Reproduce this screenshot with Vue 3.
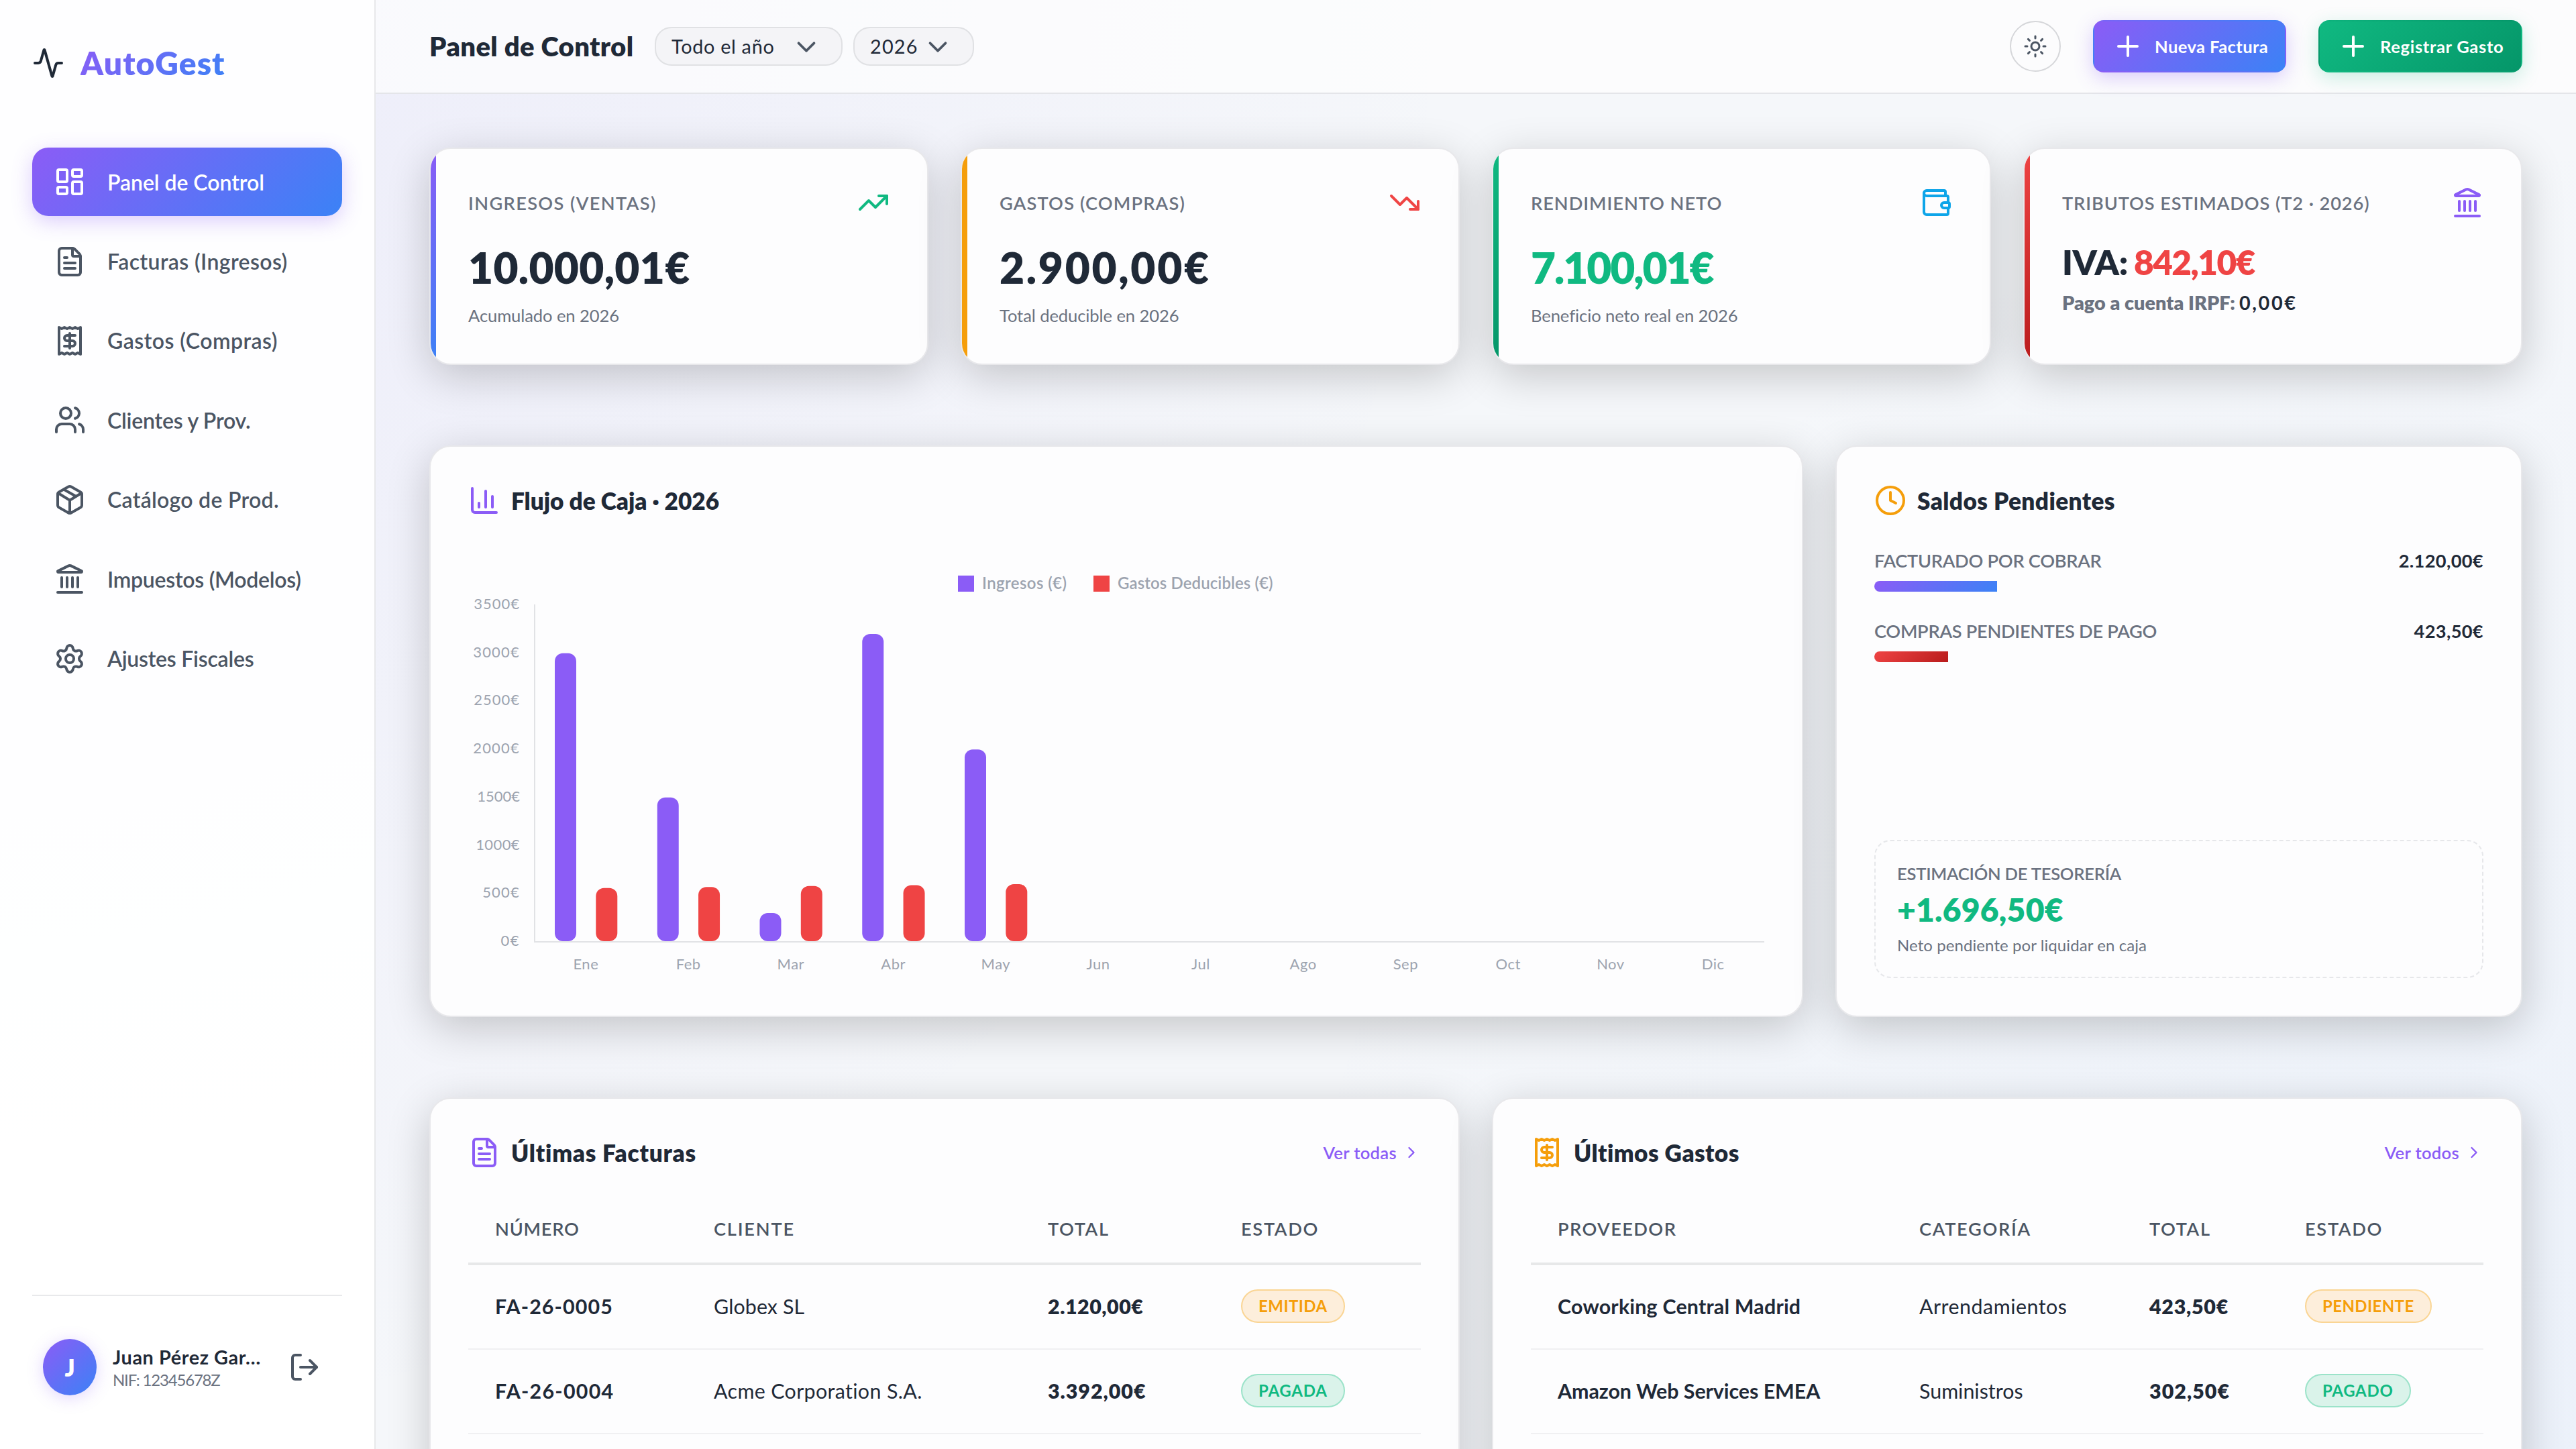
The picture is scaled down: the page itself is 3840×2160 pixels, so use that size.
<script setup>
import { h } from 'vue'

// 24-unit stroke icons, each a list of path definitions
const shapes = {
  activity: ['M22 12h-2.48a2 2 0 0 0-1.93 1.46l-2.35 8.36a.25.25 0 0 1-.48 0L9.24 2.18a.25.25 0 0 0-.48 0l-2.35 8.36A2 2 0 0 1 4.49 12H2'],
  dashboard: [
    'M4 3h5a1 1 0 0 1 1 1v7a1 1 0 0 1-1 1H4a1 1 0 0 1-1-1V4a1 1 0 0 1 1-1z',
    'M15 3h5a1 1 0 0 1 1 1v3a1 1 0 0 1-1 1h-5a1 1 0 0 1-1-1V4a1 1 0 0 1 1-1z',
    'M15 12h5a1 1 0 0 1 1 1v7a1 1 0 0 1-1 1h-5a1 1 0 0 1-1-1v-7a1 1 0 0 1 1-1z',
    'M4 16h5a1 1 0 0 1 1 1v3a1 1 0 0 1-1 1H4a1 1 0 0 1-1-1v-3a1 1 0 0 1 1-1z'
  ],
  file: [
    'M6 22a2 2 0 0 1-2-2V4a2 2 0 0 1 2-2h8a2.4 2.4 0 0 1 1.704.706l3.588 3.588A2.4 2.4 0 0 1 20 8v12a2 2 0 0 1-2 2z',
    'M14 2v5a1 1 0 0 0 1 1h5', 'M10 9H8', 'M16 13H8', 'M16 17H8'
  ],
  receipt: [
    'M4 2v20l2-1 2 1 2-1 2 1 2-1 2 1 2-1 2 1V2l-2 1-2-1-2 1-2-1-2 1-2-1-2 1Z',
    'M16 8h-6a2 2 0 1 0 0 4h4a2 2 0 1 1 0 4H8', 'M12 17.5v-11'
  ],
  users: [
    'M16 21v-2a4 4 0 0 0-4-4H6a4 4 0 0 0-4 4v2', 'M5 7a4 4 0 1 0 8 0a4 4 0 1 0-8 0',
    'M22 21v-2a4 4 0 0 0-3-3.87', 'M16 3.13a4 4 0 0 1 0 7.75'
  ],
  box: [
    'M11 21.73a2 2 0 0 0 2 0l7-4A2 2 0 0 0 21 16V8a2 2 0 0 0-1-1.73l-7-4a2 2 0 0 0-2 0l-7 4A2 2 0 0 0 3 8v8a2 2 0 0 0 1 1.73z',
    'M12 22V12', 'm3.3 7 7.703 4.734a2 2 0 0 0 1.994 0L20.7 7', 'm7.5 4.27 9 5.15'
  ],
  bank: [
    'M10 18v-7', 'M14 18v-7', 'M18 18v-7', 'M6 18v-7', 'M3 22h18',
    'M11.12 2.198a2 2 0 0 1 1.76.006l7.866 3.847c.476.233.31.949-.22.949H3.474c-.53 0-.695-.716-.22-.949z'
  ],
  gear: [
    'M9.671 4.136a2.34 2.34 0 0 1 4.659 0 2.34 2.34 0 0 0 3.319 1.915 2.34 2.34 0 0 1 2.33 4.033 2.34 2.34 0 0 0 0 3.831 2.34 2.34 0 0 1-2.33 4.033 2.34 2.34 0 0 0-3.319 1.915 2.34 2.34 0 0 1-4.659 0 2.34 2.34 0 0 0-3.32-1.915 2.34 2.34 0 0 1-2.33-4.033 2.34 2.34 0 0 0 0-3.831A2.34 2.34 0 0 1 6.35 6.051a2.34 2.34 0 0 0 3.319-1.915',
    'M9 12a3 3 0 1 0 6 0a3 3 0 1 0-6 0'
  ],
  logout: ['m16 17 5-5-5-5', 'M21 12H9', 'M9 21H5a2 2 0 0 1-2-2V5a2 2 0 0 1 2-2h4'],
  down: ['m6 9 6 6 6-6'],
  right: ['m9 18 6-6-6-6'],
  plus: ['M5 12h14', 'M12 5v14'],
  sun: [
    'M8 12a4 4 0 1 0 8 0a4 4 0 1 0-8 0', 'M12 2v2', 'M12 20v2', 'm4.93 4.93 1.41 1.41', 'm17.66 17.66 1.41 1.41',
    'M2 12h2', 'M20 12h2', 'm6.34 17.66-1.41 1.41', 'm19.07 4.93-1.41 1.41'
  ],
  up: ['M16 7h6v6', 'm22 7-8.5 8.5-5-5L2 17'],
  fall: ['M16 17h6v-6', 'm22 17-8.5-8.5-5 5L2 7'],
  wallet: [
    'M19 7V4a1 1 0 0 0-1-1H5a2 2 0 0 0 0 4h15a1 1 0 0 1 1 1v4h-3a2 2 0 0 0 0 4h3a1 1 0 0 0 1-1v-2a1 1 0 0 0-1-1',
    'M3 5v14a2 2 0 0 0 2 2h15a1 1 0 0 0 1-1v-4'
  ],
  chart: ['M3 3v16a2 2 0 0 0 2 2h16', 'M18 17V9', 'M13 17V5', 'M8 17v-3'],
  clock: ['M2 12a10 10 0 1 0 20 0a10 10 0 1 0-20 0', 'M12 6v6l4 2']
}

const Icon = (props) =>
  h('svg', {
    width: props.size || 48,
    height: props.size || 48,
    viewBox: '0 0 24 24',
    fill: 'none',
    stroke: 'currentColor',
    'stroke-width': 2,
    'stroke-linecap': 'round',
    'stroke-linejoin': 'round',
    style: 'flex:none;display:block'
  }, shapes[props.name].map((d) => h('path', { d })))
Icon.props = ['name', 'size']

const track = (n) => ({ letterSpacing: n + 'px' })

const nav = [
  { icon: 'dashboard', label: 'Panel de Control', t: -0.05, active: true },
  { icon: 'file', label: 'Facturas (Ingresos)', t: 0.38 },
  { icon: 'receipt', label: 'Gastos (Compras)', t: 0.46 },
  { icon: 'users', label: 'Clientes y Prov.', t: -0.22 },
  { icon: 'box', label: 'Catálogo de Prod.', t: 0.28 },
  { icon: 'bank', label: 'Impuestos (Modelos)', t: -0.27 },
  { icon: 'gear', label: 'Ajustes Fiscales', t: -0.25 }
]

const kpis = [
  { tone: 'violet', label: 'INGRESOS (VENTAS)', lt: 1.35, icon: 'up', ic: 'c-green', value: '10.000,01€', t: 0.3, sub: 'Acumulado en 2026' },
  { tone: 'amber', label: 'GASTOS (COMPRAS)', lt: 1.15, icon: 'fall', ic: 'c-red', value: '2.900,00€', t: 2.7, sub: 'Total deducible en 2026' },
  { tone: 'green', label: 'RENDIMIENTO NETO', lt: 0.95, icon: 'wallet', ic: 'c-sky', value: '7.100,01€', t: -2.1, sub: 'Beneficio neto real en 2026', vc: 'c-green' }
]

// chart geometry
const AXIS_X = 99
const BASE = 586
const SLOT = 152.75
const SCALE = 502 / 3500
const ticks = [
  { v: 3500, t: 0.99 }, { v: 3000, t: 1.2 }, { v: 2500, t: 1 }, { v: 2000, t: 1.2 },
  { v: 1500, t: 0 }, { v: 1000, t: 0.4 }, { v: 500, t: 1.2 }, { v: 0, t: 1.5 }
]
const months = ['Ene', 'Feb', 'Mar', 'Abr', 'May', 'Jun', 'Jul', 'Ago', 'Sep', 'Oct', 'Nov', 'Dic']
const series = [
  { income: 3000, expense: 560 },
  { income: 1500, expense: 570 },
  { income: 300, expense: 580 },
  { income: 3200, expense: 590 },
  { income: 2000, expense: 600 }
]
const bars = series.flatMap((m, i) => [
  { x: AXIS_X + i * SLOT + 30, h: m.income * SCALE - 1, fill: '#8b5cf6' },
  { x: AXIS_X + i * SLOT + 91.3, h: m.expense * SCALE - 1, fill: '#ef4444' }
])

const balances = [
  { label: 'FACTURADO POR COBRAR', value: '2.120,00€', pct: 20.1, tone: 'violet' },
  { label: 'COMPRAS PENDIENTES DE PAGO', value: '423,50€', pct: 12.1, tone: 'red' }
]

const tables = [
  {
    title: 'Últimas Facturas', tt: 0.75, icon: 'file', ic: 'c-violet', link: 'Ver todas', cls: 'invoices',
    cols: [['NÚMERO', 0.77], ['CLIENTE', 1.8], ['TOTAL', 1.6], ['ESTADO', 1.7]],
    rows: [
      { cells: [['FA-26-0005', 1.1], ['Globex SL', 0.1], ['2.120,00€', 0.5]], state: 'EMITIDA', st: 0.45, kind: 'warn' },
      { cells: [['FA-26-0004', 1.25], ['Acme Corporation S.A.', 0.35], ['3.392,00€', 0.95]], state: 'PAGADA', st: 0.75, kind: 'ok' }
    ]
  },
  {
    title: 'Últimos Gastos', tt: 0.4, icon: 'receipt', ic: 'c-amber', link: 'Ver todos', cls: 'expenses',
    cols: [['PROVEEDOR', 1.4], ['CATEGORÍA', 1.7], ['TOTAL', 1.6], ['ESTADO', 1.7]],
    rows: [
      { cells: [['Coworking Central Madrid', 0.2], ['Arrendamientos', 0.5], ['423,50€', 0.7]], state: 'PENDIENTE', st: 0.4, kind: 'warn' },
      { cells: [['Amazon Web Services EMEA', -0.05], ['Suministros', 0], ['302,50€', 1]], state: 'PAGADO', st: 0.7, kind: 'ok' }
    ]
  }
]
</script>

<template>
  <div class="app">
    <aside class="sidebar">
      <div class="logo">
        <Icon name="activity" />
        <span>AutoGest</span>
      </div>
      <nav class="nav">
        <a v-for="n in nav" :key="n.label" class="nav-item" :class="{ active: n.active }">
          <Icon :name="n.icon" />
          <span :style="track(n.t)">{{ n.label }}</span>
        </a>
      </nav>
      <div class="user">
        <div class="avatar">J</div>
        <div class="who">
          <div class="name">Juan Pérez Gar…</div>
          <div class="nif">NIF: 12345678Z</div>
        </div>
        <Icon name="logout" />
      </div>
    </aside>

    <div class="body">
      <header class="top">
        <h1>Panel de Control</h1>
        <div class="select wide"><span>Todo el año</span><Icon name="down" size="46" /></div>
        <div class="select year"><span>2026</span><Icon name="down" size="46" /></div>
        <div class="actions">
          <div class="theme"><Icon name="sun" size="36" /></div>
          <div class="btn primary"><Icon name="plus" /><span>Nueva Factura</span></div>
          <div class="btn success"><Icon name="plus" /><span>Registrar Gasto</span></div>
        </div>
      </header>

      <main class="main">
        <section class="kpis">
          <article v-for="k in kpis" :key="k.label" class="card kpi">
            <i class="strip" :class="k.tone"></i>
            <div class="kpi-head">
              <span :style="track(k.lt)">{{ k.label }}</span>
              <Icon :name="k.icon" :class="k.ic" />
            </div>
            <div class="value" :class="k.vc" :style="track(k.t)">{{ k.value }}</div>
            <div class="sub">{{ k.sub }}</div>
          </article>
          <article class="card kpi">
            <i class="strip red"></i>
            <div class="kpi-head">
              <span :style="track(0.9)">TRIBUTOS ESTIMADOS (T2 · 2026)</span>
              <Icon name="bank" class="c-violet" />
            </div>
            <div class="iva"><span>IVA:</span><span class="c-red amount">842,10€</span></div>
            <div class="irpf"><span>Pago a cuenta IRPF:</span><b>0,00€</b></div>
          </article>
        </section>

        <section class="middle">
          <article class="card">
            <div class="card-head">
              <Icon name="chart" class="c-violet" />
              <h2 :style="track(-0.05)">Flujo de Caja · 2026</h2>
            </div>
            <svg class="plot" width="1932" height="640" viewBox="0 0 1932 640">
              <rect x="730" y="40" width="24" height="24" fill="#8b5cf6" />
              <text class="legend" x="766" y="59.5">Ingresos (€)</text>
              <rect x="932" y="40" width="24" height="24" fill="#ef4444" />
              <text class="legend tight" x="968" y="59.5">Gastos Deducibles (€)</text>
              <path d="M99 83V587" stroke="#e1e2e5" stroke-width="2" />
              <path d="M98 586H1932" stroke="#e1e2e5" stroke-width="2" />
              <text
                v-for="k in ticks" :key="k.v" class="tick end" x="77"
                :y="90 + (3500 - k.v) * SCALE" :style="track(k.t)"
              >{{ k.v }}€</text>
              <rect
                v-for="(b, i) in bars" :key="i" :x="b.x" :y="BASE - 1 - b.h" width="32" :height="b.h" rx="12" :fill="b.fill"
              />
              <text v-for="(m, i) in months" :key="m" class="tick mid" :x="AXIS_X + (i + 0.5) * SLOT" y="627">{{ m }}</text>
            </svg>
          </article>

          <article class="card balances">
            <div class="card-head">
              <Icon name="clock" class="c-amber" />
              <h2 :style="track(0.4)">Saldos Pendientes</h2>
            </div>
            <div v-for="b in balances" :key="b.label" class="balance">
              <div class="balance-row"><span>{{ b.label }}</span><b>{{ b.value }}</b></div>
              <div class="track"><i :class="b.tone" :style="{ width: b.pct + '%' }"></i></div>
            </div>
            <div class="treasury">
              <div class="t-label">ESTIMACIÓN DE TESORERÍA</div>
              <div class="t-value">+1.696,50€</div>
              <div class="t-sub">Neto pendiente por liquidar en caja</div>
            </div>
          </article>
        </section>

        <section class="bottom">
          <article v-for="t in tables" :key="t.title" class="card list">
            <div class="card-head">
              <Icon :name="t.icon" :class="t.ic" />
              <h2 :style="track(t.tt)">{{ t.title }}</h2>
              <a class="more"><span>{{ t.link }}</span><Icon name="right" size="28" /></a>
            </div>
            <table :class="t.cls">
              <thead>
                <tr><th v-for="c in t.cols" :key="c[0]" :style="track(c[1])">{{ c[0] }}</th></tr>
              </thead>
              <tbody>
                <tr v-for="r in t.rows" :key="r.cells[0][0]">
                  <td v-for="c in r.cells" :key="c[0]" :style="track(c[1])">{{ c[0] }}</td>
                  <td><span class="pill" :class="r.kind" :style="track(r.st)">{{ r.state }}</span></td>
                </tr>
              </tbody>
            </table>
          </article>
        </section>
      </main>
    </div>
  </div>
</template>

<style>
html, body { margin: 0; height: 100%; overflow: hidden; }
</style>

<style scoped>
* { box-sizing: border-box; }
.app {
  display: flex;
  height: 2160px;
  overflow: hidden;
  font-family: Lato, "Noto Sans", sans-serif;
  color: #1f2937;
  white-space: nowrap;
  background:
    radial-gradient(circle at 0 0, rgba(110, 80, 246, .065), transparent 2200px),
    radial-gradient(circle at 100% 100%, rgba(59, 130, 246, .05), transparent 2000px),
    #f5f7fa;
}
h1, h2 { margin: 0; font-weight: 800; }

.c-green { color: #10b981; }
.c-red { color: #ef4444; }
.c-sky { color: #0ea5e9; }
.c-violet { color: #8b5cf6; }
.c-amber { color: #f59e0b; }
.violet { background: linear-gradient(135deg, #8b5cf6, #3b82f6); }
.amber { background: #f59e0b; }
.green { background: linear-gradient(135deg, #10b981, #059669); }
.red { background: linear-gradient(135deg, #ef4444, #b91c1c); }

/* sidebar */
.sidebar {
  flex: none;
  width: 560px;
  display: flex;
  flex-direction: column;
  padding: 0 48px;
  background: rgba(255, 255, 255, .93);
  border-right: 2px solid #e7e8ea;
}
.logo { display: flex; align-items: center; gap: 24px; height: 48px; margin: 70px 0 102px; }
.logo span {
  font-size: 48px;
  line-height: 60px;
  font-weight: 800;
  letter-spacing: 1.1px;
  background: linear-gradient(135deg, #8b5cf6, #3b82f6);
  -webkit-background-clip: text;
  background-clip: text;
  color: transparent;
}
.nav { display: flex; flex-direction: column; gap: 16px; }
.nav-item {
  display: flex;
  align-items: center;
  gap: 32px;
  height: 102.4px;
  padding: 0 32px;
  border-radius: 24px;
  font-size: 32px;
  font-weight: 600;
  color: #4b5563;
}
.nav-item.active {
  color: #fff;
  background: linear-gradient(135deg, #8b5cf6, #3b82f6);
  box-shadow: 0 8px 30px rgba(139, 92, 246, .3);
}
.user {
  display: flex;
  align-items: center;
  height: 230px;
  margin-top: auto;
  padding: 64px 30px 80px 16px;
  border-top: 2px solid #e8e9eb;
  color: #4b5563;
}
.avatar {
  flex: none;
  width: 80px;
  height: 84px;
  border-radius: 50%;
  display: flex;
  align-items: center;
  justify-content: center;
  font-size: 35px;
  font-weight: 800;
  color: #fff;
  background: linear-gradient(135deg, #8b5cf6, #3b82f6);
  box-shadow: 0 4px 24px rgba(139, 92, 246, .25);
}
.who { width: 286px; padding-left: 24px; }
.name { font-size: 28.8px; line-height: 36px; font-weight: 700; letter-spacing: .6px; color: #1f2937; }
.nif { font-size: 24px; line-height: 31px; letter-spacing: -1.2px; color: #6b7280; }

/* top bar */
.body { flex: 1; min-width: 0; display: flex; flex-direction: column; }
.top {
  flex: none;
  display: flex;
  align-items: center;
  height: 140px;
  padding: 0 80px;
  background: rgba(255, 255, 255, .65);
  border-bottom: 2px solid #e4e5e9;
}
h1 { width: 336px; font-size: 40px; letter-spacing: .35px; }
.select {
  display: flex;
  align-items: center;
  justify-content: space-between;
  height: 58px;
  padding: 0 29px 0 23px;
  border: 2px solid #e0e1e4;
  border-radius: 25px;
  background: #f4f4f7;
  font-size: 28.8px;
}
.select svg { color: #4b5563; position: relative; top: 1px; }
.wide { width: 280px; letter-spacing: .7px; }
.year { width: 180px; margin-left: 16px; letter-spacing: 1.2px; }
.actions { display: flex; align-items: center; gap: 48px; margin-left: auto; }
.theme {
  width: 76px;
  height: 76px;
  display: flex;
  align-items: center;
  justify-content: center;
  border: 2px solid #d6d7da;
  border-radius: 50%;
  color: #4b5563;
}
.btn {
  display: flex;
  align-items: center;
  gap: 16px;
  height: 78px;
  padding-left: 26px;
  border: 2px solid transparent;
  border-radius: 16px;
  font-size: 25.6px;
  font-weight: 700;
  color: #fff;
}
.primary {
  width: 288px;
  letter-spacing: .4px;
  background-image: linear-gradient(135deg, #8b5cf6, #3b82f6);
  box-shadow: 0 8px 28px rgba(139, 92, 246, .3);
}
.success {
  width: 304px;
  letter-spacing: .65px;
  background-image: linear-gradient(135deg, #10b981, #059669);
  box-shadow: 0 8px 28px rgba(16, 185, 129, .22);
}

/* cards */
.main { display: flex; flex-direction: column; gap: 120px; padding: 80px 80px 0; }
.card {
  position: relative;
  min-width: 0;
  padding: 56px;
  border: 2px solid #e8e8eb;
  border-radius: 32px;
  background: #fdfdfe;
  box-shadow: 0 16px 64px rgba(0, 0, 0, .2);
}
.kpis { display: grid; grid-template-columns: repeat(4, 1fr); gap: 48px; }
.kpi { height: 324px; overflow: hidden; }
.strip { position: absolute; left: 0; top: 0; bottom: 0; width: 8px; }
.kpi-head {
  display: flex;
  align-items: center;
  justify-content: space-between;
  height: 48px;
  margin-bottom: 34px;
  font-size: 27.2px;
  font-weight: 600;
  color: #6b7280;
}
.value { font-size: 64px; line-height: 78px; font-weight: 800; }
.sub { margin-top: 12px; font-size: 25.6px; line-height: 40px; letter-spacing: -.1px; color: #6b7280; }
.iva { display: flex; gap: 9px; margin-top: -2px; font-size: 51.2px; line-height: 64px; font-weight: 800; letter-spacing: -.3px; }
.amount { letter-spacing: -1.5px; }
.irpf { display: flex; gap: 6px; margin-top: 6px; font-size: 28.8px; line-height: 46px; font-weight: 800; letter-spacing: .03px; color: #6b7280; }
.irpf b { font-weight: 700; letter-spacing: 2.6px; color: #1f2937; }

.middle { display: grid; grid-template-columns: 2fr 1fr; gap: 48px; height: 852px; }
.card-head { display: flex; align-items: center; gap: 16px; height: 48px; }
h2 { font-size: 35.2px; }
.plot { display: block; margin-top: 48px; }
.legend { font-size: 24px; font-weight: 600; letter-spacing: .4px; fill: #9ca3af; }
.legend.tight { letter-spacing: .1px; }
.tick { font-size: 22px; fill: #9ca3af; }
.end { text-anchor: end; }
.mid { text-anchor: middle; letter-spacing: .5px; }

.balances { display: flex; flex-direction: column; }
.balance { margin-top: 37px; }
.card-head + .balance { margin-top: 44px; }
.balance-row {
  display: flex;
  justify-content: space-between;
  font-size: 27.2px;
  line-height: 43px;
  font-weight: 600;
  letter-spacing: -.3px;
  color: #6b7280;
}
.balance-row b { font-weight: 700; letter-spacing: .35px; color: #1f2937; }
.track { height: 16px; margin-top: 9px; border-radius: 8px; overflow: hidden; }
.track i { display: block; height: 100%; }
.treasury {
  height: 206px;
  margin-top: auto;
  padding: 28px 32px;
  border: 2px dashed #e6e7ea;
  border-radius: 24px;
}
.t-label { font-size: 25.6px; line-height: 40px; font-weight: 600; letter-spacing: -.25px; color: #6b7280; }
.t-value { font-size: 48px; line-height: 68px; font-weight: 800; letter-spacing: .2px; color: #10b981; }
.t-sub { font-size: 24px; line-height: 38px; letter-spacing: .08px; color: #6b7280; }

/* tables */
.bottom { display: grid; grid-template-columns: 1fr 1fr; gap: 48px; height: 640px; }
.more {
  display: flex;
  align-items: center;
  gap: 8px;
  margin-left: auto;
  font-size: 25.6px;
  font-weight: 600;
  letter-spacing: .3px;
  color: #8b5cf6;
}
table { width: 100%; margin-top: 38px; table-layout: fixed; border-spacing: 0; }
th, td { padding: 0 0 3px 40px; text-align: left; }
th {
  height: 106px;
  padding-bottom: 0;
  border-bottom: 4px solid #e7e8e9;
  font-size: 27.2px;
  font-weight: 600;
  color: #4b5563;
}
td { height: 126px; border-bottom: 2px solid #f0f0f2; font-size: 30.4px; }
td:first-child { font-weight: 700; }
td:nth-child(3) { font-weight: 800; }
.invoices th:nth-child(1) { width: 326px; }
.invoices th:nth-child(2) { width: 498px; }
.invoices th:nth-child(3) { width: 288px; }
.expenses th:nth-child(1) { width: 539px; }
.expenses th:nth-child(2) { width: 343px; }
.expenses th:nth-child(3) { width: 232px; }
.pill {
  display: inline-flex;
  align-items: center;
  height: 50px;
  padding: 0 24px;
  border: 2px solid;
  border-radius: 25px;
  font-size: 24px;
  font-weight: 700;
  vertical-align: middle;
}
.warn { color: #f59e0b; background: #fdeedb; border-color: #fad594; }
.ok { color: #10b981; background: #daf3ea; border-color: #9be3c9; }
</style>
